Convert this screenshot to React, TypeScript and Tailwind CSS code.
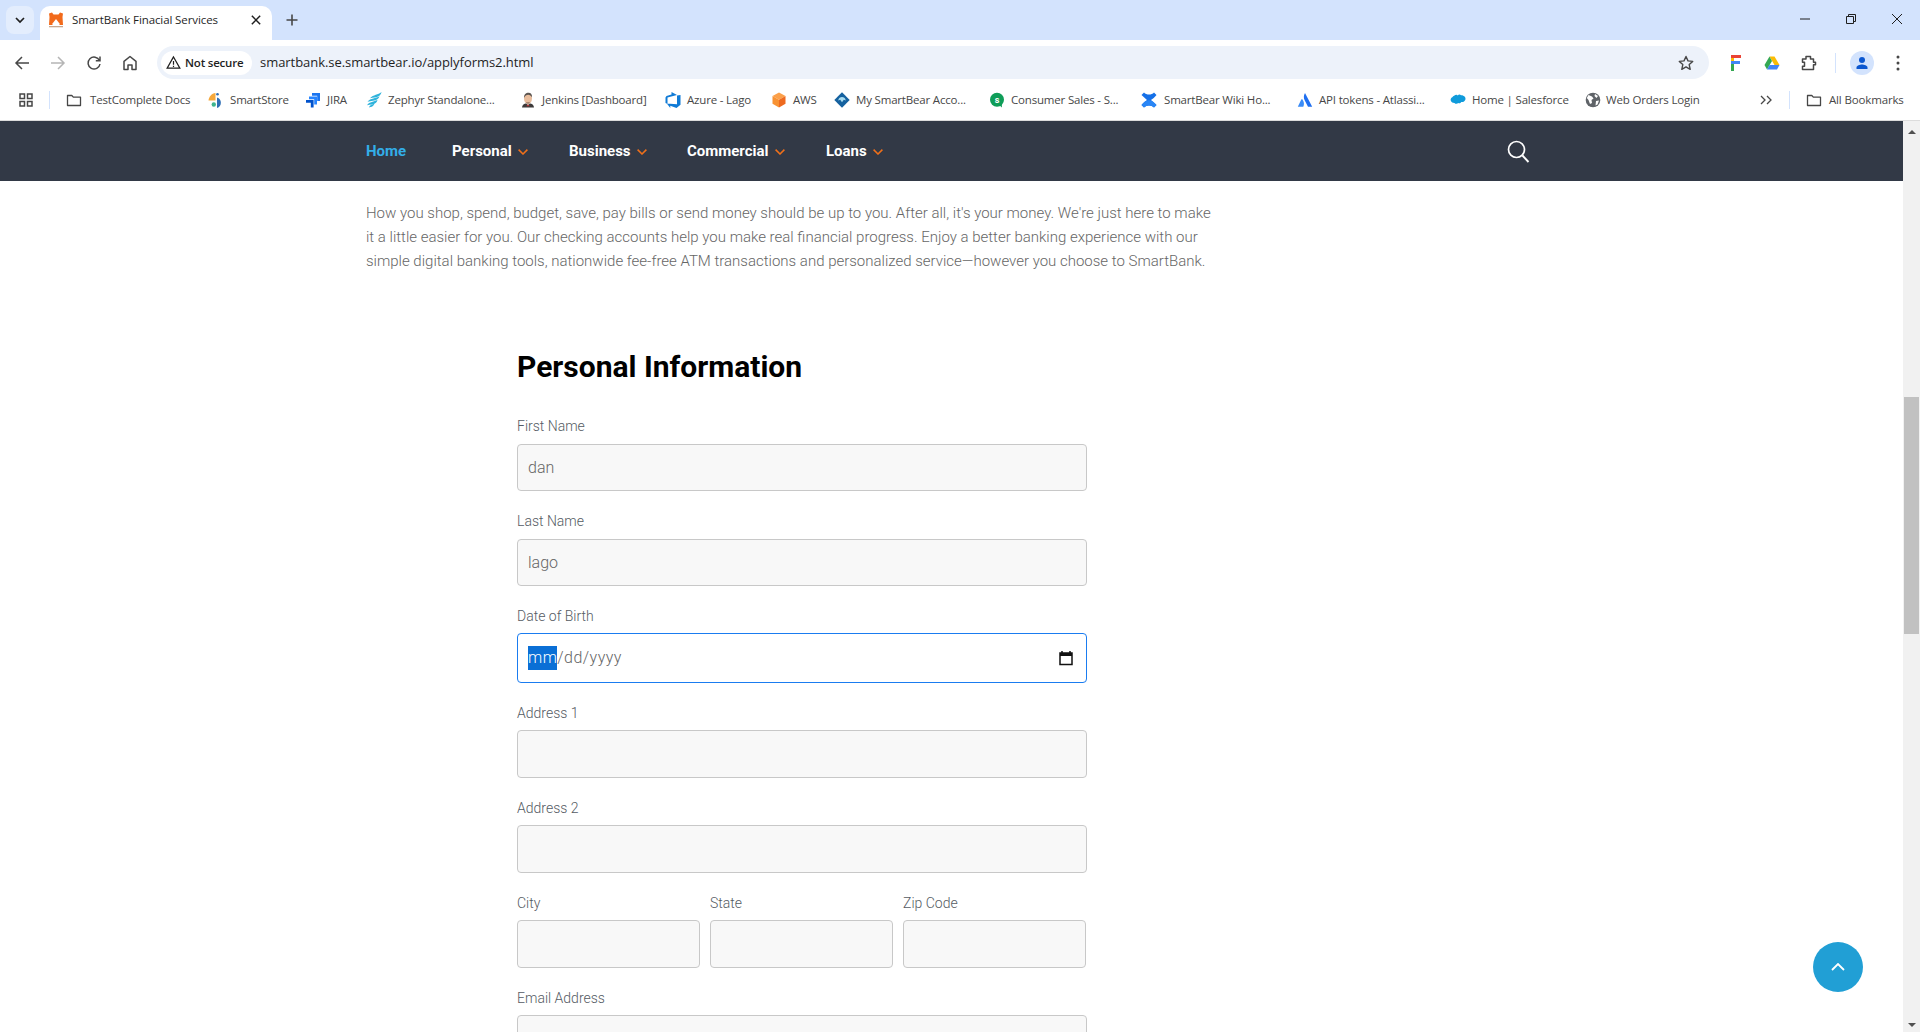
import React from "react";

const Ic = ({ children, className = "w-4 h-4" }: { children: React.ReactNode; className?: string }) => (
  <svg viewBox="0 0 16 16" className={`${className} shrink-0`}>{children}</svg>
);

const Folder = () => (
  <Ic><path d="M1.500 3.500h4.300l1.500 1.600h7.200v8.400h-13z" fill="none" stroke="#474747" strokeWidth="1.300" strokeLinejoin="round" /></Ic>
);
const SmartStore = () => (
  <Ic>
    <path d="M7.500 1C3.500 1.500 1 4.500.5 8.500h7z" fill="#f5a83c" />
    <path d="M9 5.500a5.500 5.500 0 0 1 0 10.500z" fill="#2f6fb5" />
    <circle cx="9.500" cy="2.200" r="1.300" fill="#2f6fb5" />
    <circle cx="5.800" cy="12.500" r="2.200" fill="#3fb58e" />
  </Ic>
);
const Jira = () => (
  <Ic>
    <path d="M7 1h8v8h-2.800V3.800H7z" fill="#1b75f0" />
    <path d="M4 4.500h8v8H9.200V7.300H4z" fill="#2684ff" />
    <path d="M1 8h7.600v7.500H5.800V10.800H1z" fill="#0052cc" />
  </Ic>
);
const Zephyr = () => (
  <Ic>
    <path d="M15.500 0C12 3 7.500 2.500 4 6.200c3-.6 6.500-.5 9-2.200 1.300-1 2.200-2.300 2.500-4z" fill="#2fb3dc" />
    <path d="M13.500 4.300C10 6.500 4.500 6 1.500 9.800c3.500-1 7.500-.5 10.500-3 .8-.7 1.300-1.500 1.500-2.500z" fill="#2fb3dc" />
    <path d="M11.500 7.800C8 10 3.500 9.500 1 13.300c3-.8 6.500-.4 9-2.500.8-.8 1.300-1.800 1.500-3z" fill="#2fb3dc" />
    <path d="M8.500 11.500c-2 1.200-4.500 1-5.500 4 2-.6 4.200-.5 5.500-4z" fill="#2fb3dc" />
  </Ic>
);
const Jenkins = () => (
  <Ic>
    <path d="M2 15.500c.3-2.500 1.500-3.500 3.500-4h5c2 .5 3.200 1.500 3.500 4z" fill="#3d3a3a" />
    <path d="M6.500 11.500 8 13.500l1.500-2z" fill="#e8e4de" />
    <path d="M7 12.800h2l.5 1.500h-3z" fill="#b03a3a" />
    <ellipse cx="8" cy="6.500" rx="4" ry="5.300" fill="#e9bd9d" />
    <path d="M4 6C3.800 2.500 6 .8 8.500.8c2.500 0 3.800 2 3.500 4.700-1-1.800-2.200-2.700-3.800-2.700C6.500 2.800 5 4 4 6z" fill="#5a5450" />
    <path d="M6 10c1.200.6 2.600.6 3.800 0L9 11.500H7z" fill="#8a6a58" />
  </Ic>
);
const Azure = () => (
  <Ic>
    <path d="M15.500 3v9.800l-4 3.200-6.200-2.200v2.200L1.800 11.500l10.200.8V3.500zM12 3 6.500 0v2.500L1.500 4 .5 5.500v5.500l2 1V5.500z" fill="#0f7ad6" />
  </Ic>
);
const Aws = () => (
  <Ic>
    <path d="M8 .5 14.500 4 8 7.800 1.500 4z" fill="#fba04a" />
    <path d="M1.500 4 8 7.800v7.700l-6.500-3.700z" fill="#f89233" />
    <path d="M14.500 4v7.800L8 15.500V7.800z" fill="#ee6a1f" />
  </Ic>
);
const MyBear = () => (
  <Ic>
    <path d="M8 .3 15.700 8 8 15.700.3 8z" fill="#15619f" />
    <path d="M4.200 8.400C4.700 6 6.300 5 8 5s3.300 1 3.800 3.400L9.800 7.800 8 10.300 6.200 7.800z" fill="#a9dcf0" />
  </Ic>
);
const Consumer = () => (
  <Ic>
    <circle cx="8" cy="7.700" r="7" fill="#0f9d58" />
    <path d="m10 13 3 2.500-.3-3.800z" fill="#0f9d58" />
    <text x="8" y="11" textAnchor="middle" fontSize="9" fontWeight="700" fill="#fff" fontFamily="Roboto, sans-serif">s</text>
  </Ic>
);
const Wiki = () => (
  <Ic>
    <path d="M.5 3 3 .5c2.500 2.800 7.500 2.800 10 0L15.500 3c-1.700 2.300-3.800 4-5.500 5l5.500 5L13 15.500c-2.500-2.800-7.500-2.800-10 0L.5 13C2.200 10.700 4.300 9 6 8z" fill="#1570e8" />
    <path d="M.5 13 3 15.500c2.500-2.800 7.500-2.800 10 0L15.500 13C13.500 10.500 11 8.800 8 8c-3 .8-5.500 2.500-7.500 5z" fill="#2a86f5" />
  </Ic>
);
const Atlassian = () => (
  <Ic>
    <path d="M8 1C6.500 3.500 6.500 6 7.800 8.500l3.200 6.300h4.200z" fill="#1f6ff0" />
    <path d="M4.300 7.500.8 14.800h5.500c1-2.200 1-4.500-.8-7.300-.3-.5-.9-.5-1.200 0z" fill="#3a8cf7" />
  </Ic>
);
const Cloud = () => (
  <Ic>
    <path d="M4.500 3.500c1-1 2.500-1 3.300-.1C8.500 2.500 10 2.300 11 3.200c1-.2 3 .4 4 1.800 1 1.500.5 3.500-1 4.500-1 .7-2 .7-2.700.5-.7 1.200-2 1.500-3 1-1 1-3 1-3.800-.1C3 11 1.500 10.300.9 9 .2 7.500 1 5.800 2.300 5.300c.4-.8 1.200-1.500 2.200-1.800z" fill="#0f9bdb" />
  </Ic>
);
const Globe = () => (
  <Ic>
    <circle cx="8" cy="8" r="7.300" fill="#5f6368" />
    <path d="M3.500 3 7 4.500l1.500 2-2 1.500L7 11 5 12 3.500 8 1.800 6zM10 2l3 2-1.500 2L9.500 4zM11 9l3-.5-1.500 4-2 1z" fill="#fff" />
  </Ic>
);

const Chevron = () => (
  <svg viewBox="0 0 10 6" className="ml-[6px] mt-[1px] h-[6px] w-[10px]">
    <path d="M.6.6 5 5 9.400.6" fill="none" stroke="#f0701a" strokeWidth="1.500" />
  </svg>
);

const bookmarks = [
  { w: "w-[142px]", gap: "gap-[8px]", icon: <Folder />, text: "TestComplete Docs" },
  { w: "w-[97px]", gap: "gap-[6px]", icon: <SmartStore />, text: "SmartStore" },
  { w: "w-[61px]", gap: "gap-[6px]", icon: <Jira />, text: "JIRA" },
  { w: "w-[154px]", gap: "gap-[6px]", icon: <Zephyr />, text: "Zephyr Standalone..." },
  { w: "w-[145px]", gap: "gap-[6px]", icon: <Jenkins />, text: "Jenkins [Dashboard]" },
  { w: "w-[106px]", gap: "gap-[6px]", icon: <Azure />, text: "Azure - Lago" },
  { w: "w-[63px]", gap: "gap-[6px]", icon: <Aws />, text: "AWS" },
  { w: "w-[155px]", gap: "gap-[6px]", icon: <MyBear />, text: "My SmartBear Acco..." },
  { w: "w-[152px]", gap: "gap-[6px]", icon: <Consumer />, text: "Consumer Sales - S..." },
  { w: "w-[156px]", gap: "gap-[7px]", icon: <Wiki />, text: "SmartBear Wiki Ho..." },
  { w: "w-[153px]", gap: "gap-[6px]", icon: <Atlassian />, text: "API tokens - Atlassi..." },
  { w: "w-[135px]", gap: "gap-[6px]", icon: <Cloud />, text: "Home | Salesforce" },
  { w: "w-[160px]", gap: "gap-[5px]", icon: <Globe />, text: "Web Orders Login" },
];

const navItems = [
  { label: "Personal", w: "w-[117px]" },
  { label: "Business", w: "w-[118px]" },
  { label: "Commercial", w: "w-[139px]" },
  { label: "Loans", w: "w-[60px]" },
];

const labelCls = "block h-[21px] leading-[21px] text-[14px] font-light text-[#555b63]";
const inputCls = "block w-full rounded-[4px] border border-[#c8c8c8] bg-[#f8f8f8] px-[10px] text-[16px] font-light text-[#666] outline-none";

function Field({ label, value = "", h = "h-[48px]", mb = "mb-[20px]", mt = "mt-[6px]" }: { label: string; value?: string; h?: string; mb?: string; mt?: string }) {
  return (
    <div className={mb}>
      <label className={labelCls}>{label}</label>
      <input readOnly value={value} className={`${inputCls} ${mt} ${h}`} />
    </div>
  );
}

function SmallField({ label }: { label: string }) {
  return (
    <div className="w-[183px]">
      <label className={labelCls}>{label}</label>
      <input readOnly value="" className={`${inputCls} mt-[6px] h-[48px]`} />
    </div>
  );
}

export default function App() {
  return (
    <div className="relative h-[1032px] w-[1920px] overflow-hidden bg-white font-['Roboto',sans-serif]">
      {/* Tab strip */}
      <div className="flex h-[40px] items-start bg-[#d3e3fd] pl-[6px] pt-[6px] font-['Open_Sans',sans-serif]">
        <div className="flex h-[28px] w-[28px] items-center justify-center rounded-[8px] bg-[#e3edfd]">
          <svg viewBox="0 0 12 8" className="h-[8px] w-[12px]"><path d="m2 2 4 4 4-4" fill="none" stroke="#1f1f1f" strokeWidth="1.700" /></svg>
        </div>
        <div className="relative ml-[6px] flex h-[34px] w-[232px] items-center rounded-t-[10px] bg-white pb-[6px] pl-[8px]">
          <svg viewBox="0 0 16 16" className="h-4 w-4 shrink-0">
            <path d="M1 1.500 4 .5l1.500 2h5L12 .5l3 1-.5 3.500.5 8H1l.5-8z" fill="#f26a1b" />
            <path d="M8 7 11.500 11.500v1.500H4.500v-1.500z" fill="#fff" />
            <rect x="1" y="14" width="14" height="1.300" fill="#c9a88f" />
          </svg>
          <span className="ml-[8px] whitespace-nowrap text-[11.500px] leading-none tracking-[-0.1px] text-[#1f1f1f]">SmartBank Finacial Services</span>
          <svg viewBox="0 0 12 12" className="absolute left-[211px] top-[9px] h-[10px] w-[10px]"><path d="m1 1 10 10M11 1 1 11" stroke="#1f1f1f" strokeWidth="1.800" /></svg>
        </div>
        <svg viewBox="0 0 12 12" className="ml-[14px] mt-[8px] h-[12px] w-[12px]"><path d="M6 .5v11M.5 6h11" stroke="#474747" strokeWidth="1.600" /></svg>
        <div className="ml-auto flex items-center pr-[18px] pt-[8px]">
          <svg viewBox="0 0 10 10" className="h-[10px] w-[10px]"><path d="M0 5h10" stroke="#1f1f1f" strokeWidth="1" /></svg>
          <svg viewBox="0 0 10 10" className="ml-[36px] h-[10px] w-[10px]"><path d="M.5 2.500h7v7h-7zM2.500 2.500V.5h7v7h-2" fill="none" stroke="#1f1f1f" strokeWidth="1" /></svg>
          <svg viewBox="0 0 10 10" className="ml-[36px] h-[10px] w-[10px]"><path d="m0 0 10 10M10 0 0 10" stroke="#1f1f1f" strokeWidth="1" /></svg>
        </div>
      </div>

      {/* Toolbar */}
      <div className="flex h-[40px] items-center rounded-t-[8px] bg-white pb-[1px] pl-[14px] pt-[6px]">
        <svg viewBox="0 0 16 16" className="h-4 w-4"><path d="M15 8H2M8 2 2 8l6 6" fill="none" stroke="#474747" strokeWidth="1.500" /></svg>
        <svg viewBox="0 0 16 16" className="ml-[20px] h-4 w-4"><path d="M1 8h13M8 2l6 6-6 6" fill="none" stroke="#b5b5b5" strokeWidth="1.500" /></svg>
        <svg viewBox="0 0 16 16" className="ml-[20px] h-4 w-4"><path d="M13.500 5.500A6 6 0 1 0 14 9M14 1.500v4.300H9.800" fill="none" stroke="#474747" strokeWidth="1.500" /></svg>
        <svg viewBox="0 0 16 16" className="ml-[20px] h-4 w-4"><path d="M8 1.500 2 6.300V14.500h4V10h4v4.500h4V6.300z" fill="none" stroke="#474747" strokeWidth="1.500" strokeLinejoin="round" /></svg>
        <div className="ml-[19px] flex h-[33px] w-[1552px] items-center rounded-full bg-[#edf2fa] pl-[4px] pr-[15px] font-['Open_Sans',sans-serif]">
          <div className="flex h-[24px] w-[91px] items-center rounded-full bg-white pl-[5px]">
            <svg viewBox="0 0 16 16" className="h-[15px] w-[15px] shrink-0"><path d="M8 2 1.200 14h13.600zM8 6.500v4M8 11.500v1.300" fill="none" stroke="#1f1f1f" strokeWidth="1.300" /></svg>
            <span className="ml-[4px] whitespace-nowrap text-[11.500px] font-semibold tracking-[-0.2px] text-[#1f1f1f]">Not secure</span>
          </div>
          <span className="ml-[8px] mt-px whitespace-nowrap text-[13px] tracking-[-0.05px] text-[#1f1f1f]">smartbank.se.smartbear.io/applyforms2.html</span>
          <svg viewBox="0 0 16 16" className="ml-auto h-4 w-4"><path d="m8 1.500 2 4.400 4.700.5-3.500 3.200 1 4.700L8 11.900l-4.200 2.400 1-4.700L1.300 6.400 6 5.900z" fill="none" stroke="#474747" strokeWidth="1.400" strokeLinejoin="round" /></svg>
        </div>
        <svg viewBox="0 0 16 18" className="ml-[19px] h-[18px] w-[16px]">
          <rect x="3" y="1" width="10" height="3" fill="#ea4335" />
          <rect x="3" y="7" width="9" height="3" fill="#4285f4" />
          <rect x="3" y="4" width="3" height="3" fill="#fbbc05" />
          <rect x="3" y="10" width="3" height="7" fill="#34a853" />
        </svg>
        <svg viewBox="0 0 16 16" className="ml-[20px] h-4 w-4">
          <path d="M5.500 1.500h5L15.500 10h-5z" fill="#fbbc04" />
          <path d="M5.500 1.500.5 10 3 14.500 8 6z" fill="#34a853" />
          <path d="M3 14.500h10l2.500-4.500H5.500z" fill="#4285f4" />
        </svg>
        <svg viewBox="0 0 16 16" className="ml-[21px] h-4 w-4"><path d="M1.500 4h3.500V1.500h4.500V4h3v3.200h2v2.600h-2v4.700h-11v-3.300h2V7.200h-2z" fill="none" stroke="#474747" strokeWidth="1.500" strokeLinejoin="round" /></svg>
        <div className="ml-[18px] h-[20px] w-[1px] bg-[#d3e3fd]" />
        <div className="ml-[14px] flex h-[24px] w-[24px] items-center justify-center rounded-full bg-[#d3e3fd]">
          <svg viewBox="0 0 16 16" className="h-4 w-4"><circle cx="8" cy="5" r="3" fill="#0b57d0" /><path d="M2.500 14v-1.500C2.500 10.500 6 9.500 8 9.500s5.500 1 5.500 3V14z" fill="#0b57d0" /></svg>
        </div>
        <svg viewBox="0 0 4 16" className="ml-[22px] h-4 w-1"><circle cx="2" cy="2" r="1.500" fill="#474747" /><circle cx="2" cy="8" r="1.500" fill="#474747" /><circle cx="2" cy="14" r="1.500" fill="#474747" /></svg>
      </div>

      {/* Bookmarks */}
      <div className="flex h-[41px] items-center border-b border-[#dcdcdc] bg-white pl-[19px] font-['Open_Sans',sans-serif] text-[11.500px] text-[#474747]">
        <svg viewBox="0 0 14 14" className="h-[14px] w-[14px] shrink-0"><path d="M1 1h4.500v4.500H1zM8.500 1H13v4.500H8.500zM1 8.500h4.500V13H1zM8.500 8.500H13V13H8.500z" fill="none" stroke="#474747" strokeWidth="1.500" /></svg>
        <div className="ml-[16px] h-[18px] w-[1px] shrink-0 bg-[#d3e3fd]" />
        <div className="ml-[16px] flex items-center">
          {bookmarks.map((b) => (
            <div key={b.text} className={`flex items-center whitespace-nowrap tracking-[-0.18px] ${b.gap} ${b.w}`}>
              {b.icon}
              <span>{b.text}</span>
            </div>
          ))}
        </div>
        <svg viewBox="0 0 12 10" className="ml-[15px] h-[10px] w-[12px] shrink-0"><path d="m1 1 4 4-4 4M7 1l4 4-4 4" fill="none" stroke="#474747" strokeWidth="1.300" /></svg>
        <div className="ml-[17px] h-[18px] w-[1px] shrink-0 bg-[#d3e3fd]" />
        <div className="ml-[16px] flex items-center gap-[7px] whitespace-nowrap tracking-[-0.15px]"><Folder /><span>All Bookmarks</span></div>
      </div>

      {/* Page + scrollbar */}
      <div className="flex h-[911px]">
        <div className="min-w-0 flex-1 overflow-hidden">
          <nav className="flex h-[60px] items-center justify-between bg-[#323946] pl-[366px] pr-[373px]">
            <div className="flex items-center text-[15px] font-bold text-white">
              <span className="w-[86px] text-[#33aee8]">Home</span>
              {navItems.map((n) => (
                <span key={n.label} className={`flex items-center ${n.w}`}>
                  {n.label}
                  <Chevron />
                </span>
              ))}
            </div>
            <svg viewBox="0 0 24 24" className="-mt-[1px] h-[24px] w-[24px]"><circle cx="10.500" cy="10.500" r="8" fill="none" stroke="#fff" strokeWidth="1.700" /><path d="m16.500 16.500 6 6.500" stroke="#fff" strokeWidth="1.900" /></svg>
          </nav>

          <div className="pl-[366px] pt-[20px]">
            <p className="w-[850px] text-[15px] font-light leading-[24px] text-[#666]">
              How you shop, spend, budget, save, pay bills or send money should be up to you. After all, it's your money. We're just here to make it a little easier for you. Our checking accounts help you make real financial progress. Enjoy a better banking experience with our simple digital banking tools, nationwide fee-free ATM transactions and personalized service—however you choose to SmartBank.
            </p>

            <form className="ml-[151px] w-[570px] pt-[71px]">
              <h2 className="mb-[26px] h-[46px] text-[30px] font-bold leading-[46px] text-black">Personal Information</h2>
              <Field label="First Name" value="dan" h="h-[47px]" mt="mt-[7px]" />
              <Field label="Last Name" value="lago" h="h-[47px]" mt="mt-[7px]" />
              <div className="mb-[20px]">
                <label className={labelCls}>Date of Birth</label>
                <div className="mt-[6px] flex h-[50px] items-center rounded-[4px] border border-[#1a7cf0] bg-white pl-[10px] pr-[12px] text-[16px] font-light tracking-[0.45px] text-[#666]">
                  <span className="bg-[#0a6fd6] text-white">mm</span>
                  <span>/dd/yyyy</span>
                  <svg viewBox="0 0 16 16" className="ml-auto h-4 w-4"><path d="M4 1v2M12 1v2" stroke="#111" strokeWidth="1.500" /><rect x="2" y="3" width="12" height="11.500" fill="none" stroke="#111" strokeWidth="1.500" /><rect x="2" y="3" width="12" height="3" fill="#111" /></svg>
                </div>
              </div>
              <Field label="Address 1" />
              <Field label="Address 2" />
              <div className="mb-[20px] flex gap-[10px]">
                <SmallField label="City" />
                <SmallField label="State" />
                <SmallField label="Zip Code" />
              </div>
              <Field label="Email Address" />
            </form>
          </div>
        </div>

        {/* Scrollbar */}
        <div className="flex w-[17px] shrink-0 flex-col items-center bg-[#f1f1f1]">
          <svg viewBox="0 0 8 4" className="mt-[9px] h-[4px] w-[8px]"><path d="M4 0 8 4H0z" fill="#505050" /></svg>
          <div className="mt-[263px] h-[237px] w-[15px] bg-[#c1c1c1]" />
          <svg viewBox="0 0 8 4" className="mb-[5px] mt-auto h-[4px] w-[8px]"><path d="M0 0h8L4 4z" fill="#505050" /></svg>
        </div>
      </div>

      {/* Back to top */}
      <div className="absolute left-[1813px] top-[942px] flex h-[50px] w-[50px] items-center justify-center rounded-full bg-[#219fd5]">
        <svg viewBox="0 0 14 8" className="h-[8px] w-[14px]"><path d="m1 7 6-6 6 6" fill="none" stroke="#fff" strokeWidth="1.800" /></svg>
      </div>
    </div>
  );
}
